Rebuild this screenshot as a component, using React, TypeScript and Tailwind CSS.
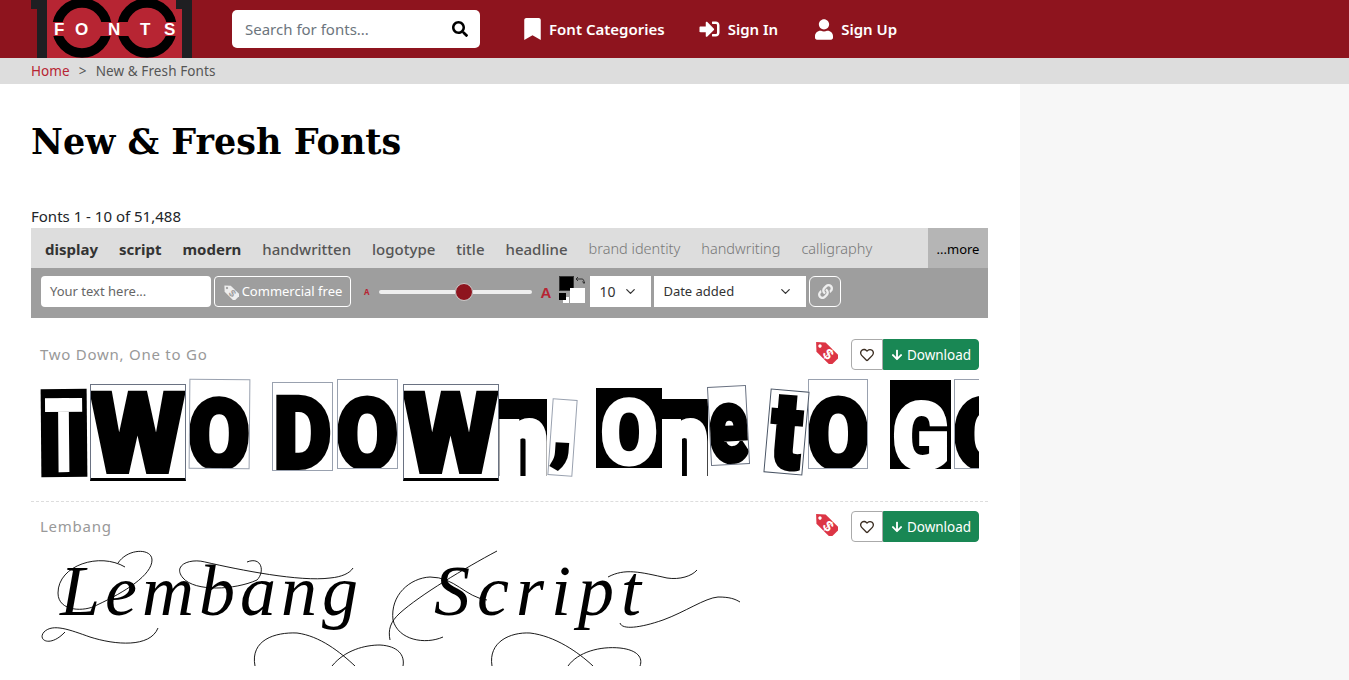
import React from 'react';
import { FaArrowDown, FaBookmark, FaLink, FaRegHeart, FaSearch, FaSignInAlt, FaUser } from 'react-icons/fa';
import { ChevronDown } from 'lucide-react';

const PriceTag = ({ fill, mark }: { fill: string; mark: string }) => (
  <svg viewBox="0 0 24 24" className="w-full h-full">
    <g transform="rotate(-45 12 12)">
      <path d="M5.5 5 L12 -2 L18.5 5 V25 H5.5 Z" fill={fill} />
      <circle cx="12" cy="3.5" r="1.7" fill={mark} />
      <text x="12" y="20" textAnchor="middle" fontSize="15" fontWeight="700" fontFamily="Liberation Sans" fill={mark} transform="rotate(90 12 15)">$</text>
    </g>
  </svg>
);

const Logo = () => (
  <svg viewBox="0 0 161 58" className="w-[161px] h-[58px] shrink-0">
    <rect x="16" y="0" width="135" height="58" fill="#b72533" />
    <path d="M0 0 H16 V58 H6 V9 H0 Z" fill="#1f1f22" />
    <path d="M161 0 H145 V9 H151 V58 H161 Z" fill="#1f1f22" />
    <circle cx="51" cy="28" r="25" fill="none" stroke="#000" strokeWidth="9.5" />
    <circle cx="116" cy="28" r="25" fill="none" stroke="#000" strokeWidth="9.5" />
    <rect x="16" y="22" width="135" height="14" fill="#b72533" />
    <g fontSize="17" fontWeight="700" fontFamily="Liberation Sans" fill="#fff">
      <text x="23" y="35">F</text>
      <text x="44" y="35">O</text>
      <text x="77" y="35">N</text>
      <text x="109" y="35">T</text>
      <text x="133" y="35">S</text>
    </g>
  </svg>
);

const ransom = [
  { ch: 'T', box: 'ml-px mt-[14px] w-[46px] h-[88px] bg-black text-white -rotate-[0.5deg]', glyph: 'text-[104px] scale-x-[0.6] -translate-y-[2px] [-webkit-text-stroke:0px_currentColor]' },
  { ch: 'W', box: 'ml-[3px] mt-[9px] w-[96px] h-[97px] pb-[3px] bg-white border border-gray-500 border-b-[3px] border-b-black text-black', glyph: 'text-[112px] scale-x-[0.97] [-webkit-text-stroke:4px_currentColor]' },
  { ch: 'O', box: 'ml-[3px] mt-[4px] w-[61px] h-[90px] bg-white border border-gray-400 text-black rotate-[0.5deg]', glyph: 'text-[96px] scale-x-[0.92] translate-y-[2px] [-webkit-text-stroke:5px_currentColor]' },
  { ch: 'D', box: 'ml-[22px] mt-[7px] w-[61px] h-[89px] bg-white border border-gray-400 text-black', glyph: 'text-[100px] scale-x-[0.9] [-webkit-text-stroke:4px_currentColor]' },
  { ch: 'O', box: 'ml-[4px] mt-[4px] w-[61px] h-[90px] bg-white border border-gray-400 text-black', glyph: 'text-[96px] scale-x-[0.92] translate-y-[2px] [-webkit-text-stroke:5px_currentColor]' },
  { ch: 'W', box: 'ml-[5px] mt-[9px] w-[96px] h-[97px] pb-[3px] bg-white border border-gray-500 border-b-[3px] border-b-black text-black', glyph: 'text-[112px] scale-x-[0.97] [-webkit-text-stroke:4px_currentColor]' },
  { ch: 'n', box: 'mt-[24px] w-[48px] h-[77px] bg-black text-white', glyph: 'text-[96px] scale-x-[0.88] [-webkit-text-stroke:8px_currentColor]' },
  { ch: ',', box: 'ml-[3px] mt-[24px] w-[25px] h-[77px] pb-[18px] bg-white border border-gray-400 text-black rotate-[4deg]', glyph: 'text-[80px] [-webkit-text-stroke:3px_currentColor]' },
  { ch: 'O', box: 'ml-[21px] mt-[13px] w-[66px] h-[80px] pb-[1px] bg-black text-white', glyph: 'text-[90px] scale-x-[0.92] [-webkit-text-stroke:3px_currentColor]' },
  { ch: 'n', box: 'mt-[24px] w-[46px] h-[77px] bg-black text-white', glyph: 'text-[94px] scale-x-[0.86] [-webkit-text-stroke:8px_currentColor]' },
  { ch: 'e', box: 'ml-px mt-[11px] w-[39px] h-[79px] bg-white border border-gray-500 text-black -rotate-[3deg]', glyph: 'text-[104px] scale-x-[0.7] [-webkit-text-stroke:5px_currentColor]' },
  { ch: 't', box: 'ml-[19px] mt-[15px] w-[39px] h-[84px] pb-[2px] bg-white border border-gray-600 text-black rotate-[5deg]', glyph: 'text-[108px] scale-x-[0.85] [-webkit-text-stroke:4px_currentColor]' },
  { ch: 'O', box: 'ml-[2px] mt-[4px] w-[60px] h-[90px] bg-white border border-gray-400 text-black', glyph: 'text-[96px] scale-x-[0.92] translate-y-[2px] [-webkit-text-stroke:5px_currentColor]' },
  { ch: 'G', box: 'ml-[22px] mt-[5px] w-[61px] h-[89px] bg-black text-white', glyph: 'text-[90px] scale-x-[0.92] translate-y-[2px] [-webkit-text-stroke:4px_currentColor]' },
  { ch: 'O', box: 'ml-[3px] mt-[4px] w-[61px] h-[90px] shrink-0 bg-white border border-gray-400 text-black', glyph: 'text-[96px] scale-x-[0.92] translate-y-[2px] [-webkit-text-stroke:5px_currentColor]' },
];

const TwoDownPreview = () => (
  <div className="flex items-start w-[939px] h-[110px] overflow-hidden">
    {ransom.map((l, i) => (
      <div key={i} className={`shrink-0 flex items-end justify-center overflow-hidden ${l.box}`}>
        <span className={`font-['Roboto'] font-black leading-[0.72] ${l.glyph}`}>{l.ch}</span>
      </div>
    ))}
  </div>
);

const LembangPreview = () => (
  <div className="relative -mt-[2px] w-[939px] h-[121px] overflow-hidden">
    <div className="pt-[6px] pl-[20px] font-['Liberation_Serif'] italic text-[72px] leading-[80px] tracking-[5px] text-black whitespace-nowrap">
      Lembang <span className="ml-[48px] tracking-[7px]">Script</span>
    </div>
    {/* swashes around the lettering */}
    <svg viewBox="40 545 939 121" className="absolute inset-0 w-[939px] h-[121px]" fill="none" stroke="#000" strokeWidth="0.9">
      <path d="M125 567 C100 552 58 565 58 593 C58 612 85 612 97 605 C125 592 152 575 152 560 C152 548 128 548 118 563" />
      <path d="M158 628 C150 648 115 645 90 637 C70 630 53 623 44 632 C37 640 50 648 65 632" />
      <path d="M247 562 C262 556 265 572 257 580 C235 590 195 592 183 578 C172 565 190 558 205 562 C240 570 300 582 330 578 C342 577 350 573 353 568" />
      <path d="M255 666 C250 640 275 632 297 633 C320 636 340 652 355 666" />
      <path d="M332 666 C345 650 365 645 380 645 C398 646 405 655 403 666" />
      <path d="M497 551 C465 568 420 595 400 613 C390 622 388 630 390 640" />
      <path d="M393 620 C390 595 410 578 430 577 C455 577 465 597 487 600" />
      <path d="M393 620 C398 640 425 645 443 637" />
      <path d="M492 666 C488 642 510 632 530 633 C555 636 578 652 593 666" />
      <path d="M568 666 C578 652 600 646 620 648 C638 650 643 658 640 666" />
      <path d="M608 577 C625 568 640 572 667 578 C680 580 692 576 697 570" />
      <path d="M620 623 C622 630 640 628 663 620 C685 612 705 598 718 597 C730 597 735 599 740 602" />
    </svg>
  </div>
);

const FontRow = ({ name, divider, children }: { name: string; divider?: boolean; children: React.ReactNode }) => (
  <div className={divider ? 'border-b border-dashed border-[#ddd] pb-[16px]' : ''}>
    <div className="flex items-center justify-between pl-[9px] pr-[9px] h-[31px]">
      <span className="text-[15px] tracking-[0.75px] text-[#999]">{name}</span>
      <div className="flex items-center">
        <div className="w-[24px] h-[24px] mr-[13px] mb-[6px]"><PriceTag fill="#dc3545" mark="#fff" /></div>
        <div className="w-[32px] h-[31px] flex items-center justify-center bg-white border border-[#aaa] rounded-l-[4px] text-[#3a2c20]">
          <FaRegHeart className="w-[14px] h-[14px]" />
        </div>
        <div className="w-[96px] h-[31px] pt-[1px] flex items-center justify-center gap-[4px] bg-[#198754] border border-[#198754] rounded-r-[4px] text-white text-[13.5px]">
          <FaArrowDown className="w-[12px] h-[12px]" />
          Download
        </div>
      </div>
    </div>
    <div className="pl-[9px] pt-[5px]">{children}</div>
  </div>
);

const tags = [
  { t: 'display', c: 'font-bold text-[#333]' },
  { t: 'script', c: 'font-bold text-[#333]' },
  { t: 'modern', c: 'font-bold text-[#333]' },
  { t: 'handwritten', c: 'font-medium text-[#555]' },
  { t: 'logotype', c: 'font-medium text-[#555]' },
  { t: 'title', c: 'font-medium text-[#555]' },
  { t: 'headline', c: 'font-medium text-[#555]' },
  { t: 'brand identity', c: 'font-light text-[14.5px] text-[#777]' },
  { t: 'handwriting', c: 'font-light text-[14.5px] text-[#777]' },
  { t: 'calligraphy', c: 'font-light text-[14.5px] text-[#777]' },
];

export default function App() {
  return (
    <div className="h-[680px] overflow-hidden bg-white font-['Noto_Sans','Open_Sans',sans-serif] text-[#212529]">
      <header className="h-[58px] bg-[#8e141e] flex items-center pl-[31px] overflow-hidden">
        <Logo />
        <div className="ml-[40px] w-[248px] h-[38px] bg-white rounded-[5px] flex items-center justify-between pl-[13px] pr-[12px]">
          <span className="text-[15px] text-[#6c757d]">Search for fonts...</span>
          <FaSearch className="w-[16px] h-[16px] text-black" />
        </div>
        <nav className="ml-[44px] flex items-center text-white text-[15px] font-semibold">
          <a className="flex items-center gap-[8px]"><FaBookmark className="w-[17px] h-[22px]" />Font Categories</a>
          <a className="ml-[34px] flex items-center gap-[8px]"><FaSignInAlt className="w-[21px] h-[20px]" />Sign In</a>
          <a className="ml-[37px] flex items-center gap-[8px]"><FaUser className="w-[18px] h-[21px]" />Sign Up</a>
        </nav>
      </header>

      <div className="h-[26px] bg-[#ddd] flex items-center pl-[31px] pt-[1px] text-[13.5px] tracking-[0.1px]">
        <a className="text-[#b72533]">Home</a>
        <span className="mx-[9px] text-[#555]">&gt;</span>
        <span className="text-[#555]">New &amp; Fresh Fonts</span>
      </div>

      <div className="flex">
        <main className="w-[1020px] pl-[31px] pr-[32px]">
          <h1 className="mt-[34px] font-['DejaVu_Serif'] font-bold text-[35px] leading-[48px] text-black">New &amp; Fresh Fonts</h1>
          <p className="mt-[39px] text-[15px] leading-[23px]">Fonts 1 - 10 of 51,488</p>

          <div className="h-[40px] bg-[#ddd] flex items-center justify-between pl-[14px] text-[15px]">
            <div className="flex items-center gap-[21px] pt-[2px]">
              {tags.map((x) => (
                <span key={x.t} className={x.c}>{x.t}</span>
              ))}
            </div>
            <span className="w-[60px] h-full pt-[3px] bg-[#b5b5b5] flex items-center justify-center text-[13px] text-black">...more</span>
          </div>

          <div className="h-[50px] bg-[#9e9e9e] flex items-start pt-[8px] pl-[10px]">
            <div className="w-[170px] h-[31px] bg-white rounded-[4px] flex items-center pl-[9px] text-[13px] text-[#666]">Your text here...</div>
            <div className="ml-[3px] w-[137px] h-[31px] border border-white rounded-[4px] flex items-center justify-center gap-[3px] text-[13px] text-white">
              <div className="w-[16px] h-[16px] shrink-0"><PriceTag fill="#eee" mark="#9e9e9e" /></div>
              Commercial free
            </div>
            <span className="ml-[13px] mt-[10px] text-[8px] font-bold text-[#b72533]">A</span>
            <div className="ml-[9px] mt-[7px] w-[153px] flex items-center">
              <div className="flex-1 h-[4px] bg-[#eee] rounded-l-full" />
              <div className="w-[18px] h-[18px] rounded-full bg-[#8e141e] border border-[#ccc]" />
              <div className="w-[59px] h-[4px] bg-[#eee] rounded-r-full" />
            </div>
            <span className="ml-[9px] mt-[6px] text-[15px] font-bold font-['Liberation_Sans'] text-[#b72533]">A</span>
            <div className="relative ml-[8px] w-[26px] h-[27px] shrink-0">
              <div className="absolute left-0 top-0 w-[15px] h-[15px] bg-black border border-[#333]" />
              <div className="absolute right-0 bottom-0 w-[15px] h-[15px] bg-white" />
              <div className="absolute left-[4px] bottom-0 w-[6px] h-[6px] bg-white" />
              <div className="absolute left-0 bottom-[3px] w-[7px] h-[7px] bg-black" />
              <svg viewBox="0 0 10 10" className="absolute right-0 top-0 w-[10px] h-[10px]" fill="none" stroke="#333" strokeWidth="1">
                <path d="M1 3 H7 C8.5 3 9 4 9 7 M7.5 5.5 L9 7.5 L10 5.5 M1 3 L3 1 M1 3 L3 5" />
              </svg>
            </div>
            <div className="ml-[5px] w-[61px] h-[31px] bg-white flex items-center justify-between pl-[9px] pr-[13px] text-[14px] text-[#333]">
              10
              <ChevronDown className="w-[15px] h-[15px]" />
            </div>
            <div className="ml-[3px] w-[152px] h-[31px] bg-white flex items-center justify-between pl-[9px] pr-[13px] text-[13px] text-[#333]">
              Date added
              <ChevronDown className="w-[15px] h-[15px]" />
            </div>
            <div className="ml-[3px] w-[32px] h-[31px] border border-white rounded-[6px] flex items-center justify-center text-[#eee]">
              <FaLink className="w-[15px] h-[15px]" />
            </div>
          </div>

          <div className="mt-[21px]">
            <FontRow name="Two Down, One to Go" divider>
              <TwoDownPreview />
            </FontRow>
            <div className="mt-[9px]">
              <FontRow name="Lembang">
                <LembangPreview />
              </FontRow>
            </div>
          </div>
        </main>
        <aside className="flex-1 h-[596px] bg-[#f7f7f7]" />
      </div>
    </div>
  );
}
